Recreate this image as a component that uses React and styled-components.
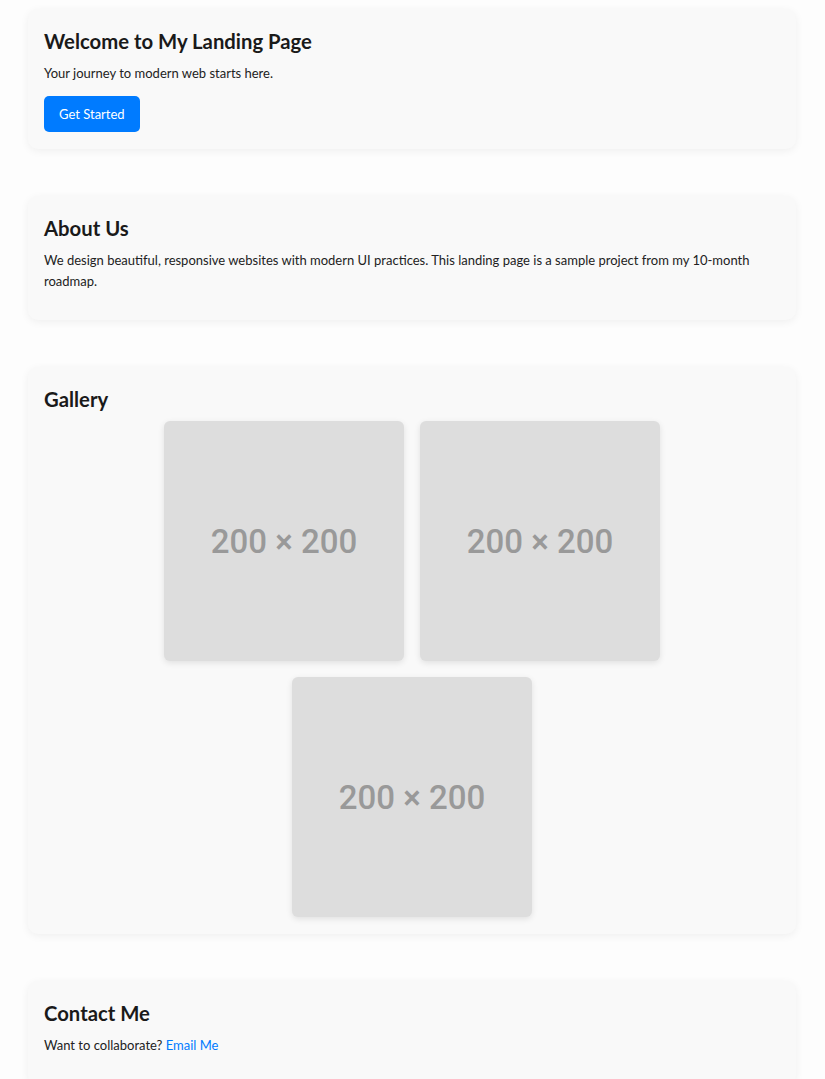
import styled, { createGlobalStyle } from "styled-components"

const GlobalStyle = createGlobalStyle`
  body {
    margin: 0;
    background: #fdfdfd;
    font-family: Lato, "Noto Sans", sans-serif;
    color: #222;
  }
`

const Page = styled.main`
  width: 768px;
  margin-left: 28px;
  padding-top: 9px;
  display: flex;
  flex-direction: column;
  gap: 47px;
`

const Section = styled.section`
  background: #f9f9f9;
  border-radius: 10px;
  box-shadow: 0 2px 8px rgba(0, 0, 0, 0.06);
  padding: 19px 16px 17px;
`

const Heading = styled.h2`
  margin: 0 0 8px;
  font-size: 20.3px;
  line-height: 27px;
  font-weight: 700;
  color: #1a1a1a;
`

const Text = styled.p`
  margin: 0 0 ${(p) => (p.$last ? "11px" : "12px")};
  font-size: 13px;
  line-height: 21px;
  color: #222;
`

const Button = styled.button`
  background: #007bff;
  color: #fff;
  border: none;
  border-radius: 5px;
  height: 36px;
  padding: 0 15px;
  font-family: inherit;
  font-size: 13px;
  cursor: pointer;
`

const Gallery = styled.div`
  display: flex;
  flex-wrap: wrap;
  justify-content: center;
  gap: 16px;
  margin-top: 4px;
`

const Placeholder = styled.div`
  width: 240px;
  height: 240px;
  background: #dddddd;
  border-radius: 6px;
  box-shadow: 0 2px 6px rgba(0, 0, 0, 0.1);
  display: flex;
  align-items: center;
  justify-content: center;
  font-family: Roboto, "Liberation Sans", sans-serif;
  font-weight: 500;
  font-size: 33px;
  color: #999;
`

const Link = styled.a`
  color: #007bff;
  text-decoration: none;
`

export default function App() {
  return (
    <>
      <GlobalStyle />
      <Page>
        <Section>
          <Heading>Welcome to My Landing Page</Heading>
          <Text>Your journey to modern web starts here.</Text>
          <Button>Get Started</Button>
        </Section>

        <Section>
          <Heading>About Us</Heading>
          <Text $last>
            We design beautiful, responsive websites with modern UI practices. This landing page is a sample project
            from my 10-month roadmap.
          </Text>
        </Section>

        <Section>
          <Heading>Gallery</Heading>
          <Gallery>
            <Placeholder>200 × 200</Placeholder>
            <Placeholder>200 × 200</Placeholder>
            <Placeholder>200 × 200</Placeholder>
          </Gallery>
        </Section>

        <Section>
          <Heading>Contact Me</Heading>
          <Text>
            Want to collaborate? <Link href="#">Email Me</Link>
          </Text>
        </Section>
      </Page>
    </>
  )
}
